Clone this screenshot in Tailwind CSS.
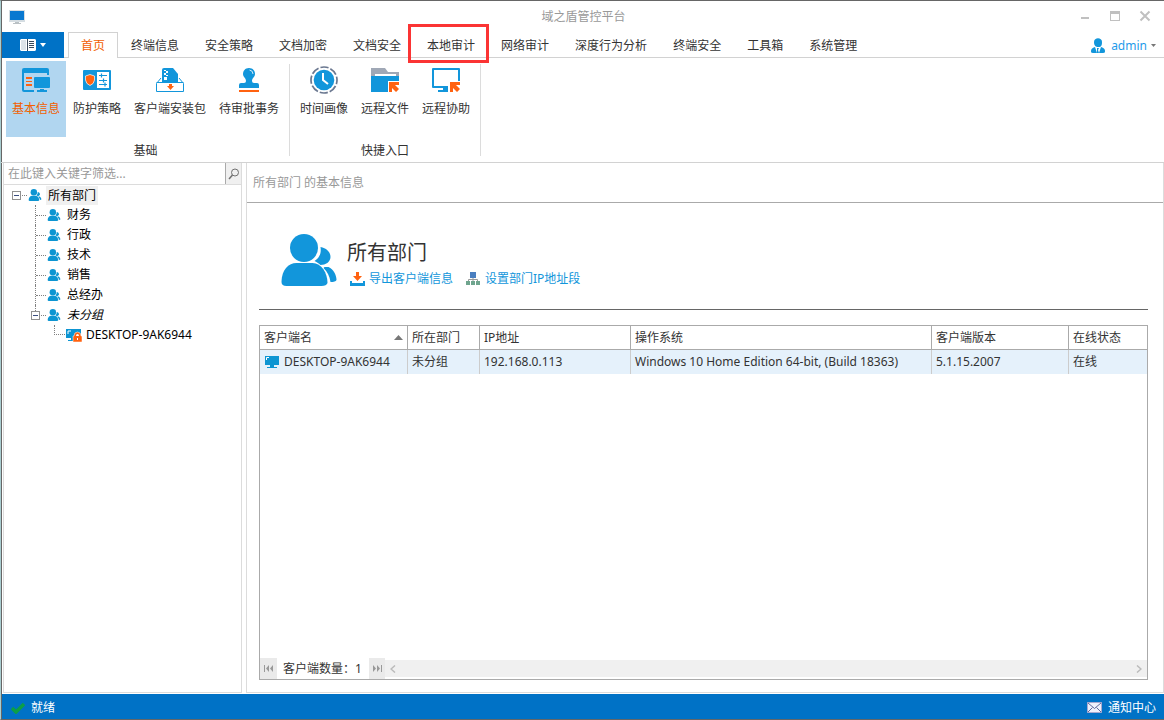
<!DOCTYPE html>
<html lang="zh-CN">
<head>
<meta charset="utf-8">
<title>域之盾管控平台</title>
<script src="https://cdn.jsdelivr.net/npm/@tailwindcss/browser@4"></script>
</head>
<body class="flex h-screen flex-col overflow-hidden border-t border-b border-l border-t-[#666] border-b-[#666] border-l-[#a9cdd0] bg-white font-['Noto_Sans','Noto_Sans_CJK_SC',sans-serif] text-xs text-[#333] shadow-[inset_1px_0_0_#666]">
<svg class="hidden" aria-hidden="true">
  <symbol id="people" viewBox="0 0 55 52">
    <circle cx="22.500" cy="14" r="14"/>
    <path d="M0 48C0 36 7 29 15 29H31C40 29 46 39 46 49Q45 52 40 52H5Q0 52 0 48Z"/>
    <path d="M39 13C45 14 49 18 49 23C49 28 44 31 39 31C37 29 35 28 33 27C38 24 40 19 39 13Z"/>
    <path d="M43 33H47C52 35 55 41 55 46Q54 48 49 48C48 42 46 38 42 34Z"/>
  </symbol>
  <symbol id="arrow-box" viewBox="0 0 10 10">
    <path fill="#ff6210" d="M0 0H10V3H6L10 7L7 10L3 6V10H0Z"/>
  </symbol>
</svg>

<header class="flex h-[31px] shrink-0 items-center pr-3 pl-2">
  <svg class="h-4 w-4" viewBox="0 0 16 16"><path fill="#d5dde2" d="M0 1H16V13H0Z"/><path fill="#0878d0" d="M1 2H15V11H1Z"/><path fill="#b9c0c4" d="M6 13H10V14H12V15H4V14H6Z"/></svg>
  <h1 class="flex-1 pl-16 text-center text-[#999]">域之盾管控平台</h1>
  <div class="flex items-center gap-4 pb-1 text-[#c0c0c0]">
    <button aria-label="最小化"><svg class="h-4 w-[14px]" viewBox="0 0 14 16"><path d="M3 10H11V12H3Z" fill="currentColor"/></svg></button>
    <button aria-label="最大化"><svg class="h-4 w-[14px]" viewBox="0 0 14 16"><path d="M2 4H12V14H2ZM3 7V13H11V7Z" fill="currentColor" fill-rule="evenodd"/></svg></button>
    <button aria-label="关闭"><svg class="h-4 w-[14px]" viewBox="0 0 14 16"><path d="M2.500 4.500L11.500 13.500M11.500 4.500L2.500 13.500" stroke="currentColor" stroke-width="2"/></svg></button>
  </div>
</header>

<nav class="flex h-[26px] shrink-0 pl-px">
  <button aria-label="菜单" class="flex w-[62px] items-center justify-center gap-1 bg-[#0072c6]">
    <svg class="h-3 w-4" viewBox="0 0 16 12"><path fill="#fff" d="M1 0H15L16 1V11L15 12H1L0 11V1Z"/><path fill="#3b4a5a" d="M7 0H8V12H7ZM9 2H14V3H9ZM9 4H14V5H9ZM9 6H14V7H9ZM9 8H14V9H9Z"/><path fill="#dde3e8" d="M1 1H6V11H1Z"/></svg>
    <svg class="h-1 w-[6px]" viewBox="0 0 6 4"><path fill="#fff" d="M0 0H6L3 4Z"/></svg>
  </button>
  <div class="w-1 border-b border-[#d2d2d2]"></div>
  <a href="#" class="flex items-center border border-b-0 border-[#d2d2d2] px-3 text-[#f26000]">首页</a>
  <a href="#" class="flex items-center border-b border-[#d2d2d2] px-[13px] pt-[2px]">终端信息</a>
  <a href="#" class="flex items-center border-b border-[#d2d2d2] px-[13px] pt-[2px]">安全策略</a>
  <a href="#" class="flex items-center border-b border-[#d2d2d2] px-[13px] pt-[2px]">文档加密</a>
  <a href="#" class="flex items-center border-b border-[#d2d2d2] px-[13px] pt-[2px]">文档安全</a>
  <a href="#" class="relative flex items-center border-b border-[#d2d2d2] px-[13px] pt-[2px]">本地审计<span class="absolute -top-2 -right-px -bottom-[6px] -left-[6px] border-3 border-[#fb3434]"></span></a>
  <a href="#" class="flex items-center border-b border-[#d2d2d2] px-[13px] pt-[2px]">网络审计</a>
  <a href="#" class="flex items-center border-b border-[#d2d2d2] px-[13px] pt-[2px]">深度行为分析</a>
  <a href="#" class="flex items-center border-b border-[#d2d2d2] px-[13px] pt-[2px]">终端安全</a>
  <a href="#" class="flex items-center border-b border-[#d2d2d2] px-[13px] pt-[2px]">工具箱</a>
  <a href="#" class="flex items-center border-b border-[#d2d2d2] px-[13px] pt-[2px]">系统管理</a>
  <div class="flex flex-1 items-center justify-end border-b border-[#d2d2d2] pt-[2px] pr-2">
    <button class="flex items-center text-[#1e9bea]">
      <svg class="mr-[6px] h-4 w-[14px]" viewBox="0 0 14 16" fill="#1296db"><path d="M3 4C3-1 11-1 11 4S9 9 7 9 3 8 3 4Z"/><path d="M4 9L6 15H2C0 15 0 14 0 13C0 11 1 10 4 9ZM10 9L8 15H12C14 15 14 14 14 13C14 11 13 10 10 9ZM6 10H8L7 12L8 15H6Z"/></svg>
      admin
      <svg class="ml-1 h-[3px] w-[5px]" viewBox="0 0 5 3"><path fill="#777" d="M0 0H5L2.500 3Z"/></svg>
    </button>
  </div>
</nav>

<section class="flex h-[105px] shrink-0 border-b border-[#d2d2d2] pt-[3px] pl-[5px]">
  <div class="flex flex-col">
    <div class="flex h-[76px] gap-px">
      <button class="flex w-[60px] flex-col items-center bg-[#b1d6f0] pt-[5px] text-[#f26000]">
        <svg class="mb-[7px] h-7 w-7" viewBox="0 0 28 28"><path fill="#1296db" d="M2 2H25Q27 2 27 4V7H0V4Q0 2 2 2ZM0 7H2V24H12V26H2Q0 26 0 24ZM25 7H27V9H25ZM13 11H27Q28 11 28 12V21Q28 22 27 22H13Q12 22 12 21V12Q12 11 13 11ZM18 23H22V24H25V26H15V24H18Z"/><path fill="#ff6210" d="M4 11H10V13H4ZM4 15H10V16H4ZM4 18H10V20H4Z"/></svg>基本信息</button>
      <button class="flex w-[60px] flex-col items-center pt-[5px]">
        <svg class="mb-[7px] h-7 w-7" viewBox="0 0 28 28"><path fill="#1296db" d="M1 4H27Q28 4 28 5V23Q28 24 27 24H1Q0 24 0 23V5Q0 4 1 4Z"/><path fill="#fff" d="M14 6H26V22H14Z"/><path fill="#ff6210" stroke="#fff" stroke-width=".700" d="M7 8.500L11.500 10V14Q11 18 7 19.500Q3 18 2.500 14V10Z"/><path stroke="#1296db" fill="none" stroke-width="1.200" d="M16 9.500H24M16 14.500H24M16 18.500H24M18.500 7.500V11.500M20.500 12.500V16.500M22 16.500V20.500"/></svg>防护策略</button>
      <button class="flex w-[84px] flex-col items-center pt-[5px]">
        <svg class="mb-[7px] h-7 w-7" viewBox="0 0 28 28"><path fill="#1296db" d="M6 4Q6 2 8 2H17L22 8V17H6Z"/><path fill="#fff" d="M8 4H10V5H8ZM10 5H12V7H10ZM8 7H10V9H8ZM10 9H12V10H10ZM8 11H11V14H8Z"/><path fill="none" stroke="#1296db" d="M5 12L.500 17.500V25.500H27.500V17.500L23 12M.500 16.500H27.500"/><path fill="#ff6210" d="M13 18H16V20H18L14.500 24L11 20H13Z"/></svg>客户端安装包</button>
      <button class="flex w-[72px] flex-col items-center pt-[5px]">
        <svg class="mb-[7px] h-7 w-7" viewBox="0 0 28 28"><path fill="#1296db" d="M14 2C18 2 20 5 20 8C20 11 17 12 17 15Q17 17 19 17H22Q24 17 24 19V22H4V19Q4 17 6 17H9Q11 17 11 15C11 12 8 11 8 8C8 5 10 2 14 2Z"/><path fill="none" stroke="#fff" stroke-width=".800" d="M14.500 4Q18 4.500 18 8"/><path fill="#ff6210" d="M4 24H24V26H4Z"/></svg>待审批事务</button>
    </div>
    <p class="pt-[6px] text-center">基础</p>
  </div>
  <div class="mx-1 mt-[3px] h-[92px] w-px bg-[#dcdcdc]"></div>
  <div class="flex flex-col">
    <div class="flex h-[76px] gap-px">
      <button class="flex w-[60px] flex-col items-center pt-[5px]">
        <svg class="mb-[7px] h-7 w-7" viewBox="0 0 28 28"><circle cx="14" cy="14" r="13" fill="none" stroke="#6b7890" stroke-width="1.700" stroke-dasharray="8.200 2.010" stroke-dashoffset="4"/><circle cx="14" cy="14" r="10.300" fill="#1296db"/><path fill="none" stroke="#fff" stroke-width="2" d="M13 7V14L18 18"/></svg>时间画像</button>
      <button class="flex w-[60px] flex-col items-center pt-[5px]">
        <svg class="mb-[7px] h-7 w-7" viewBox="0 0 28 28"><path fill="#a0a8b6" d="M0 2H14L17 6H28V10H25V8H4V10H0Z"/><path fill="#1296db" d="M0 10H28V15H17V26H0Z"/><use href="#arrow-box" x="18" y="16" width="10" height="10"/></svg>远程文件</button>
      <button class="flex w-[60px] flex-col items-center pt-[5px]">
        <svg class="mb-[7px] h-7 w-7" viewBox="0 0 28 28"><path fill="#1296db" d="M1 2H27Q28 2 28 3V15H26V4H2V20H16V22H1Q0 22 0 21V3Q0 2 1 2ZM11 22H16V26H6V24H11Z"/><use href="#arrow-box" x="18" y="16" width="10" height="10"/></svg>远程协助</button>
    </div>
    <p class="pt-[6px] text-center">快捷入口</p>
  </div>
  <div class="mx-1 mt-[3px] h-[92px] w-px bg-[#dcdcdc]"></div>
</section>

<main class="flex min-h-0 flex-1 gap-1 pb-px pl-[2px]">
  <aside class="w-[239px] shrink-0 border-r border-b border-l border-[#dcdcdc] text-black">
    <div class="flex h-[22px] border-b border-[#dcdcdc]">
      <input aria-label="筛选" placeholder="在此键入关键字筛选..." class="min-w-0 flex-1 pl-1 outline-none placeholder:text-[#999]">
      <button aria-label="搜索" class="flex w-4 items-center justify-center border-l border-[#aaa] bg-[#f0f0f0]"><svg class="h-3 w-3" viewBox="0 0 12 12" fill="none" stroke="#707070"><circle cx="7" cy="4.500" r="3.500"/><path stroke-width="1.500" d="M4.500 7L1 11"/></svg></button>
    </div>
    <ul class="leading-5">
      <li>
        <div class="flex h-5 items-center pl-2">
          <button aria-label="折叠" class="flex h-[9px] w-[9px] items-center justify-center border border-[#919191]"><span class="h-px w-[5px] bg-[#3b4f81]"></span></button>
          <span class="mr-px ml-px w-[5px] border-t border-dotted border-[#808080]"></span>
          <svg class="h-3 w-[14px] fill-[#0d95d2]"><use href="#people"/></svg>
          <span class="ml-1 h-[19px] bg-[#f0f0f0] px-[2px]">所有部门</span>
        </div>
        <ul class="ml-[31px]">
          <li class="flex h-5 items-center border-l border-dotted border-[#808080]"><span class="mr-px w-[10px] border-t border-dotted border-[#808080]"></span><svg class="mr-[6px] h-3 w-[14px] fill-[#0d95d2]"><use href="#people"/></svg>财务</li>
          <li class="flex h-5 items-center border-l border-dotted border-[#808080]"><span class="mr-px w-[10px] border-t border-dotted border-[#808080]"></span><svg class="mr-[6px] h-3 w-[14px] fill-[#0d95d2]"><use href="#people"/></svg>行政</li>
          <li class="flex h-5 items-center border-l border-dotted border-[#808080]"><span class="mr-px w-[10px] border-t border-dotted border-[#808080]"></span><svg class="mr-[6px] h-3 w-[14px] fill-[#0d95d2]"><use href="#people"/></svg>技术</li>
          <li class="flex h-5 items-center border-l border-dotted border-[#808080]"><span class="mr-px w-[10px] border-t border-dotted border-[#808080]"></span><svg class="mr-[6px] h-3 w-[14px] fill-[#0d95d2]"><use href="#people"/></svg>销售</li>
          <li class="flex h-5 items-center border-l border-dotted border-[#808080]"><span class="mr-px w-[10px] border-t border-dotted border-[#808080]"></span><svg class="mr-[6px] h-3 w-[14px] fill-[#0d95d2]"><use href="#people"/></svg>总经办</li>
          <li>
            <div class="-ml-1 flex h-5 items-center">
              <div class="flex h-5 flex-col items-center"><span class="h-[6px] w-0 border-l border-dotted border-[#808080]"></span><button aria-label="折叠" class="flex h-[9px] w-[9px] items-center justify-center border border-[#919191]"><span class="h-px w-[5px] bg-[#3b4f81]"></span></button></div>
              <span class="mr-px ml-px w-[5px] border-t border-dotted border-[#808080]"></span>
              <svg class="mr-[6px] h-3 w-[14px] fill-[#0d95d2]"><use href="#people"/></svg><i>未分组</i>
            </div>
            <ul class="ml-[19px]">
              <li class="flex h-5 items-center">
                <span class="mr-px h-[10px] w-[11px] self-start border-b border-l border-dotted border-[#808080]"></span>
                <svg class="mr-1 h-[14px] w-4" viewBox="0 0 16 14"><path fill="#0d95d2" d="M0 1H15V10H0ZM2 12H9V13H2ZM5 10H8V12H5Z"/><path fill="none" stroke="#fff" d="M2 6V3H5"/><path fill="#ff6210" stroke="#fff" stroke-width=".500" d="M7 8H8Q8 4 11.500 4T15 8H16V14H7Z"/><path fill="#fff" d="M10 8Q10 6 11.500 6T13 8ZM11 10H12V12H11Z"/></svg>
                <span>DESKTOP-9AK6944</span>
              </li>
            </ul>
          </li>
        </ul>
      </li>
    </ul>
  </aside>

  <section class="flex min-w-0 flex-1 flex-col border-r border-b border-l border-[#dcdcdc]">
    <h2 class="flex h-10 shrink-0 items-center border-b border-[#aaa] pl-[6px] text-[#999]">所有部门 的基本信息</h2>
    <div class="flex min-h-0 flex-1 flex-col pr-[15px] pb-3 pl-3">
      <div class="flex h-[107px] shrink-0 items-start gap-[10px] border-b border-[#666] pt-[31px] pl-[22px]">
        <svg class="h-[52px] w-[56px] fill-[#1296db]"><use href="#people"/></svg>
        <div class="pt-[5px]">
          <h3 class="text-xl leading-7">所有部门</h3>
          <div class="flex h-6 items-center gap-[13px] pl-[3px] text-[#1296db]">
            <a href="#" class="flex items-center gap-1"><svg class="h-[14px] w-[15px]" viewBox="0 0 15 14"><path fill="#1296db" d="M0 9H2V11H13V9H15V14H0Z"/><path fill="#ff6210" d="M6 0H9V4H12L7.500 9L3 4H6Z"/></svg>导出客户端信息</a>
            <a href="#" class="flex items-center gap-[5px]"><svg class="h-[14px] w-[14px]" viewBox="0 0 14 14"><path fill="#4a7fc0" d="M4 0H10V6H4Z"/><path fill="none" stroke="#999" d="M7 6V10M2.500 10V7.500H11.500V10"/><path fill="#6fa58e" d="M0 9H4V13H0ZM5 9H9V13H5ZM10 9H14V13H10Z"/></svg>设置部门IP地址段</a>
          </div>
        </div>
      </div>
      <div class="mt-[15px] flex min-h-0 flex-1 flex-col border border-[#aaa]">
        <table class="w-full table-fixed border-separate border-spacing-0 text-left whitespace-nowrap">
          <colgroup><col class="w-[148px]"><col class="w-[72px]"><col class="w-[151px]"><col class="w-[301px]"><col class="w-[137px]"><col></colgroup>
          <thead>
            <tr class="h-6 *:border-b *:border-[#aaa] *:px-1 *:py-0 *:font-normal">
              <th class="border-r"><span class="flex items-center justify-between">客户端名<svg class="h-[5px] w-[9px]" viewBox="0 0 9 5"><path fill="#777" d="M0 5H9L4.500 0Z"/></svg></span></th>
              <th class="border-r">所在部门</th><th class="border-r">IP地址</th><th class="border-r">操作系统</th><th class="border-r">客户端版本</th><th>在线状态</th>
            </tr>
          </thead>
          <tbody>
            <tr class="h-6 bg-[#e5f1fb] *:border-[#ccc] *:px-1 *:py-0">
              <td class="border-r"><span class="flex items-center gap-[5px]"><svg class="ml-px h-3 w-[14px]" viewBox="0 0 14 12"><path fill="#0d95d2" d="M0 0H14V9H0ZM5 9H9V11H12V12H2V11H5Z"/><path fill="none" stroke="#fff" d="M1.500 4V1.500H4"/></svg>DESKTOP-9AK6944</span></td>
              <td class="border-r">未分组</td><td class="border-r">192.168.0.113</td><td class="border-r">Windows 10 Home Edition 64-bit, (Build 18363)</td><td class="border-r">5.1.15.2007</td><td>在线</td>
            </tr>
          </tbody>
        </table>
        <footer class="mt-auto flex h-[21px] items-center">
          <button aria-label="第一条" class="flex h-full w-[17px] items-center justify-center bg-[#eaeaea]"><svg class="h-[7px] w-[10px]" viewBox="0 0 10 7" fill="#999"><path d="M0 0H1V7H0ZM5 0V7L2 3.500ZM9 0V7L6 3.500Z"/></svg></button>
          <span class="w-[92px] pl-[6px] whitespace-nowrap">客户端数量：1</span>
          <button aria-label="最后一条" class="flex h-full w-4 items-center justify-center bg-[#eaeaea]"><svg class="h-[7px] w-[10px]" viewBox="0 0 10 7" fill="#999"><path d="M9 0H10V7H9ZM1 0V7L4 3.500ZM5 0V7L8 3.500Z"/></svg></button>
          <div class="flex h-[17px] flex-1 items-center justify-between bg-[#f0f0f0] px-[5px]">
            <button aria-label="向左"><svg class="h-2 w-[6px]" viewBox="0 0 6 8"><path fill="none" stroke="#bbb" stroke-width="1.500" d="M5 0.500L1 4L5 7.500"/></svg></button>
            <button aria-label="向右"><svg class="h-2 w-[6px]" viewBox="0 0 6 8"><path fill="none" stroke="#bbb" stroke-width="1.500" d="M1 0.500L5 4L1 7.500"/></svg></button>
          </div>
        </footer>
      </div>
    </div>
  </section>
</main>

<footer class="ml-px flex h-[25px] shrink-0 items-center justify-between bg-[#0072c6] pt-[2px] pr-2 pl-[9px] text-white">
  <span class="flex items-center gap-[6px]"><svg class="h-3 w-[14px]" viewBox="0 0 14 12"><path fill="none" stroke="#0c9f47" stroke-width="3.500" d="M1 6L5 10L13 2"/></svg>就绪</span>
  <button class="flex items-center gap-[6px]"><svg class="h-[11px] w-[15px]" viewBox="0 0 15 11"><path fill="#eef0fb" stroke="#a6a8cf" d="M.500 .500H14.500V10.500H.500Z"/><path fill="none" stroke="#5f6a9c" d="M1 1L7.500 6.500L14 1M1 10L5.500 5.500M14 10L9.500 5.500"/></svg>通知中心</button>
</footer>
</body>
</html>
